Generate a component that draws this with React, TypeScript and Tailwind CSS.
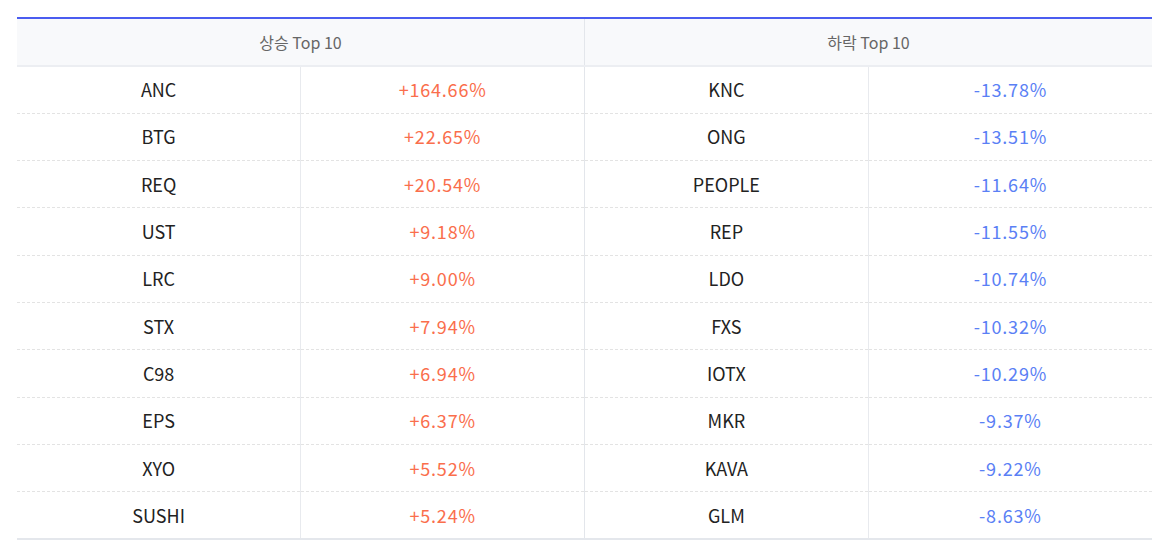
import React from 'react';

const gainers: Array<[string, string]> = [
  ['ANC', '+164.66%'],
  ['BTG', '+22.65%'],
  ['REQ', '+20.54%'],
  ['UST', '+9.18%'],
  ['LRC', '+9.00%'],
  ['STX', '+7.94%'],
  ['C98', '+6.94%'],
  ['EPS', '+6.37%'],
  ['XYO', '+5.52%'],
  ['SUSHI', '+5.24%'],
];

const losers: Array<[string, string]> = [
  ['KNC', '-13.78%'],
  ['ONG', '-13.51%'],
  ['PEOPLE', '-11.64%'],
  ['REP', '-11.55%'],
  ['LDO', '-10.74%'],
  ['FXS', '-10.32%'],
  ['IOTX', '-10.29%'],
  ['MKR', '-9.37%'],
  ['KAVA', '-9.22%'],
  ['GLM', '-8.63%'],
];

const App: React.FC = () => {
  return (
    <div className="min-h-screen bg-white pt-[17px] pl-[17px] pr-[13px]" style={{ fontFamily: '"Noto Sans CJK KR", "Noto Sans", sans-serif' }}>
      <table className="w-[1135px] border-collapse table-fixed border-t-2 border-t-[#4a5cf0] border-b-2 border-b-[#e4e7ec]">
        <thead>
          <tr className="bg-[#f8f9fb]">
            <th colSpan={2} className="h-[48px] border-b-2 border-b-[#eceef2] border-r border-r-[#e3e6eb] text-[16px] font-normal text-[#666]">
              상승 Top 10
            </th>
            <th colSpan={2} className="h-[48px] border-b-2 border-b-[#eceef2] text-[16px] font-normal text-[#666]">
              하락 Top 10
            </th>
          </tr>
        </thead>
        <tbody>
          {gainers.map((g, i) => {
            const l = losers[i];
            const last = i === gainers.length - 1;
            return (
              <tr key={g[0]} className={last ? '' : 'border-b border-dashed border-b-[#e3e3e3]'}>
                <td className="h-[47.3px] text-center text-[18px] text-[#222] border-r border-r-[#e8eaee]">{g[0]}</td>
                <td className="h-[47.3px] text-center text-[18px] tracking-[0.8px] text-[#fa6e4c] border-r border-r-[#e3e6eb]">{g[1]}</td>
                <td className="h-[47.3px] text-center text-[18px] text-[#222] border-r border-r-[#e8eaee]">{l[0]}</td>
                <td className="h-[47.3px] text-center text-[18px] tracking-[0.8px] text-[#5a80f5]">{l[1]}</td>
              </tr>
            );
          })}
        </tbody>
      </table>
    </div>
  );
};

export default App;
